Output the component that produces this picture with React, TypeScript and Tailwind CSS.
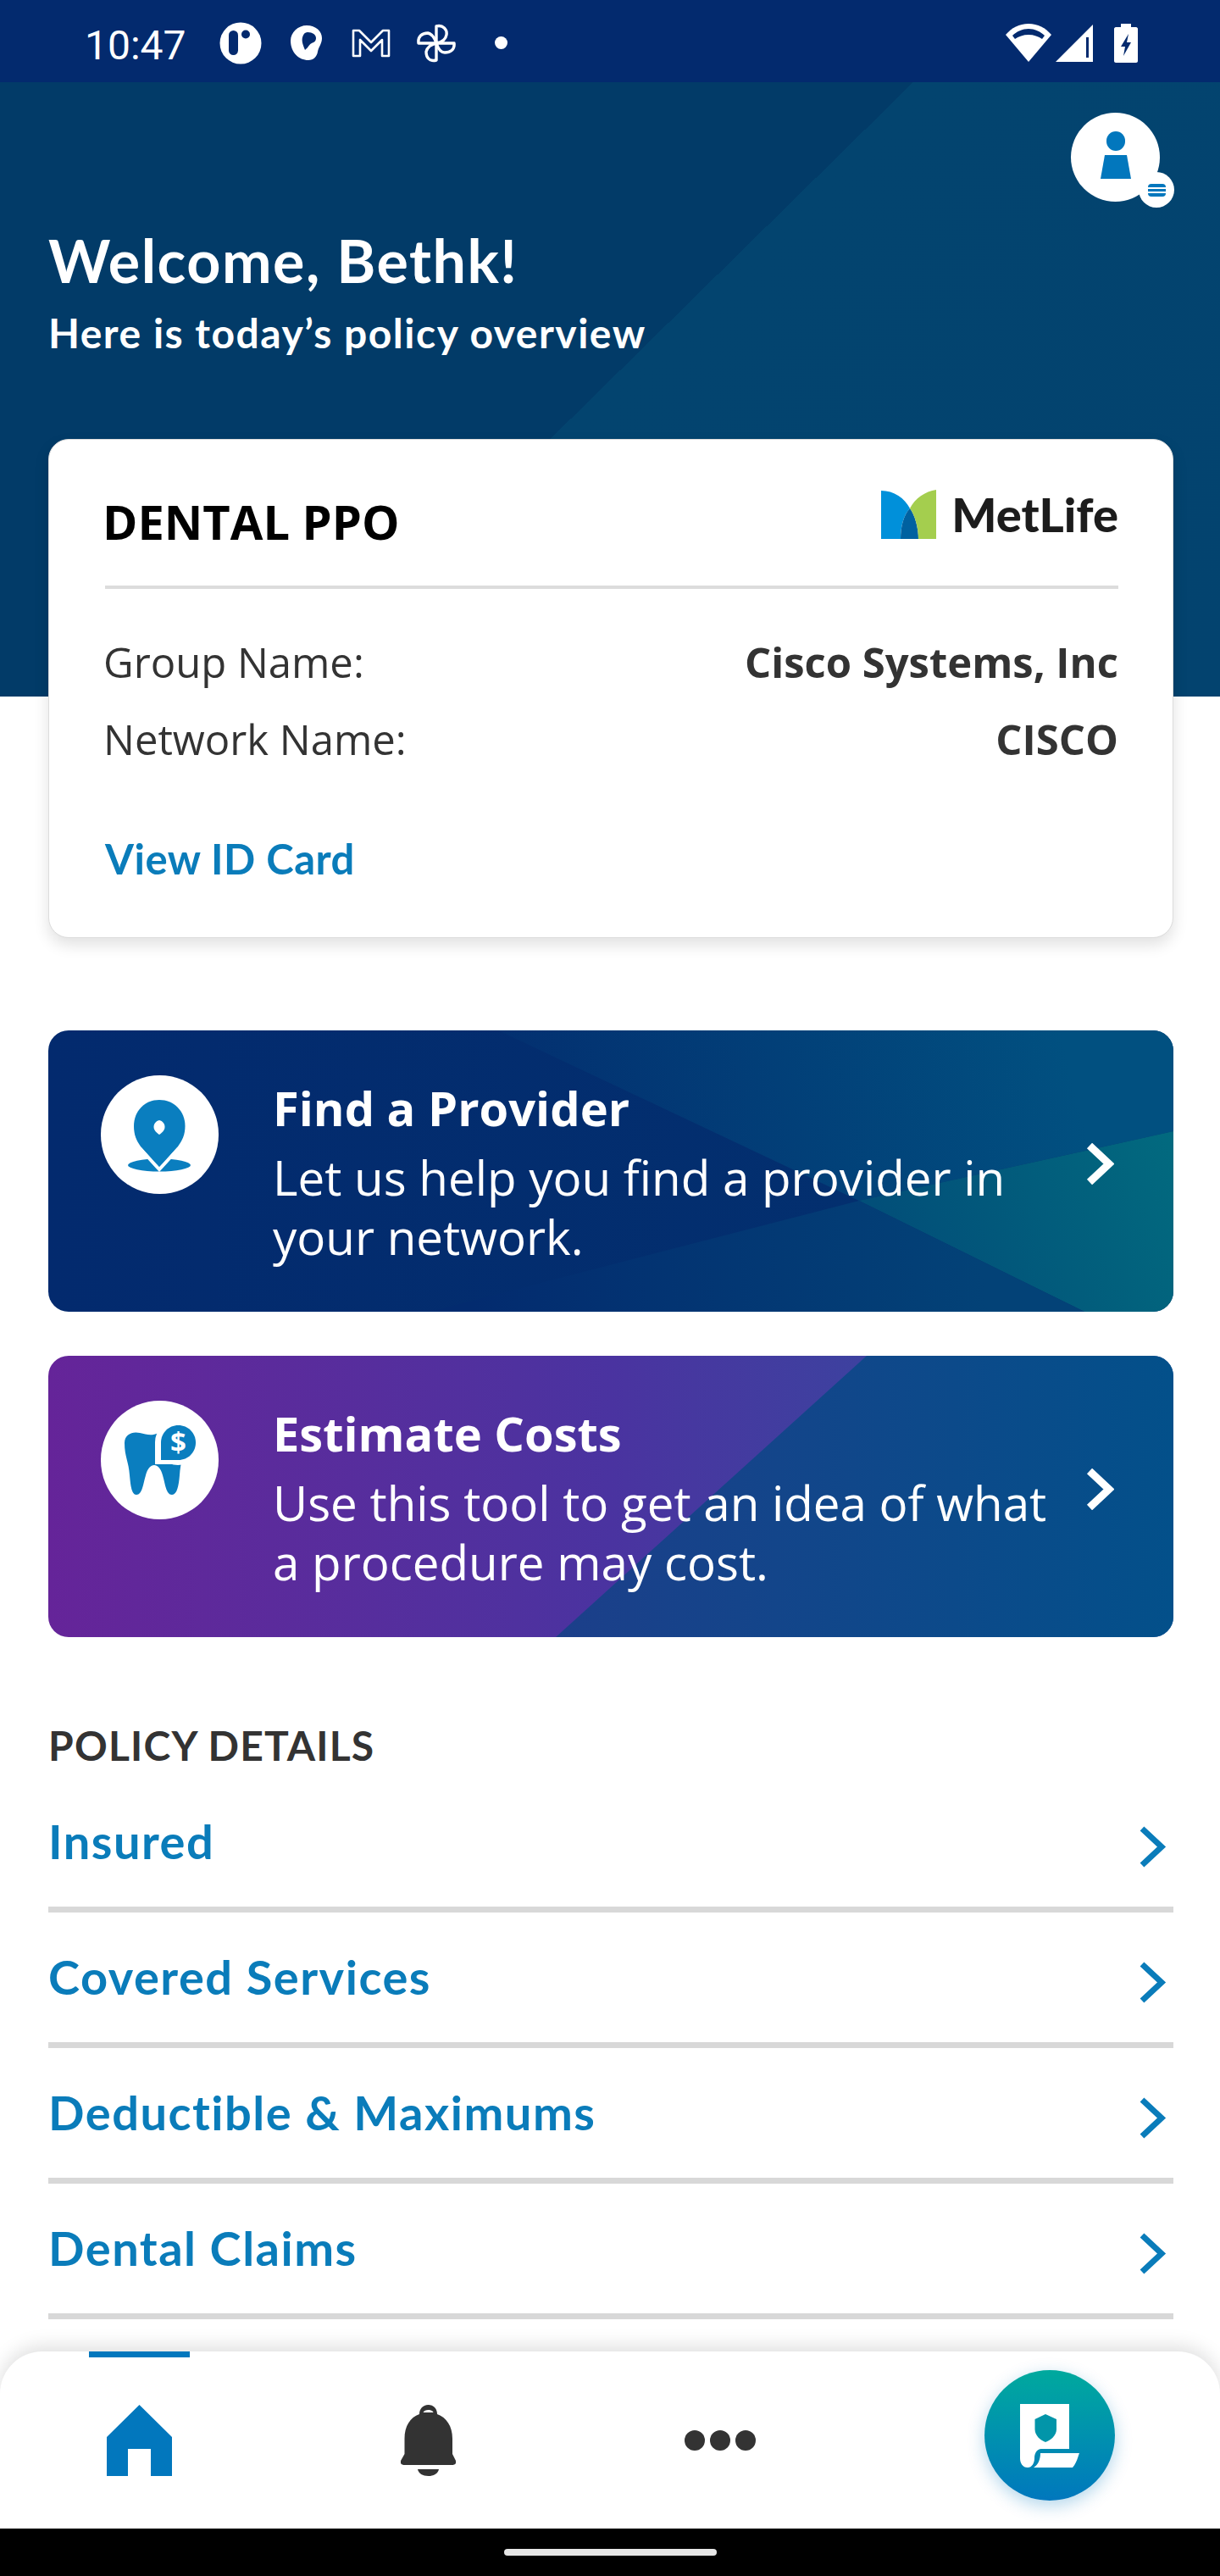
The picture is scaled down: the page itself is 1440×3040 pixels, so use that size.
const policyLinks = ["Insured", "Covered Services", "Deductible & Maximums", "Dental Claims"];

function StatusIcons() {
  return (
    <div className="h-[97px] bg-[#032a6e] flex items-center shrink-0 pl-[100px] pt-[4px] text-white">
      <span className="font-['Roboto',sans-serif] text-[48px] leading-none w-[159px] mt-[6px]">10:47</span>
      {/* app icons */}
      <svg width="50" height="50" viewBox="0 0 50 50">
        <circle cx="25" cy="25" r="24.5" fill="#fff" />
        <rect x="11" y="10" width="11" height="29" rx="5.5" fill="#032a6e" />
        <circle cx="31" cy="14.5" r="5" fill="#032a6e" />
      </svg>
      <svg width="38" height="42" viewBox="0 0 38 42" className="ml-[34px]">
        <path d="M19 0C30 0 37 7 37 15C37 22 33 25 32 31C31 37 27 41 21 41C10 41 0 32 0 18C0 8 9 0 19 0Z" fill="#fff" />
        <path d="M20 8C26 8 30 11 30 15C30 19 27 20 25 21C22 22 21 26 17 29C14 22 13 18 14 14C15 10 17 8 20 8Z" fill="#032a6e" />
      </svg>
      <svg width="46" height="36" viewBox="0 0 46 36" className="ml-[34px]">
        <path d="M2 3H9L23 17L37 3H44V33H36V14L23 27L10 14V33H2Z" fill="none" stroke="#fff" strokeWidth="2.6" strokeLinejoin="round" />
      </svg>
      <svg width="46" height="46" viewBox="0 0 46 46" className="ml-[31px]">
        <g fill="none" stroke="#fff" strokeWidth="3.4" strokeLinejoin="round">
          <path d="M23 23V3C31 1 36 7 35 13C34 19 29 22 23 23Z" />
          <path d="M23 23H44C45 31 39 34 33 34C28 34 25 29 23 23Z" />
          <path d="M23 23V43C15 45 11 40 11 33C12 28 17 24 23 23Z" />
          <path d="M23 23H2C1 15 6 11 13 11C18 12 21 17 23 23Z" />
        </g>
      </svg>
      <span className="ml-[46px] w-[15px] h-[15px] rounded-full bg-white" />
      <div className="ml-auto pr-[97px] flex items-center">
        <svg width="54" height="45" viewBox="0 0 54 45">
          <path d="M27 45L0 13C7 5 16 0 27 0C38 0 47 5 54 13Z" fill="#fff" />
          <path d="M8 14C13 9 20 6 27 6C34 6 41 9 46 14L43 18C39 15 33 13 27 13C21 13 15 15 11 18Z" fill="#032a6e" />
        </svg>
        <svg width="44" height="44" viewBox="0 0 44 44" className="ml-[5px]">
          <path d="M44 0V44H0Z" fill="#fff" />
          <path d="M36 15H39V39H36Z" fill="#032a6e" />
        </svg>
        <svg width="28" height="46" viewBox="0 0 28 46" className="ml-[25px]">
          <path d="M8 0H20V4H26C27 4 28 5 28 6V44C28 45 27 46 26 46H2C1 46 0 45 0 44V6C0 5 1 4 2 4H8Z" fill="#fff" />
          <path d="M17 12L8 27H13L11 38L20 22H15Z" fill="#032a6e" />
        </svg>
      </div>
    </div>
  );
}

function MetLifeMark() {
  return (
    <svg width="65" height="58" viewBox="0 0 65 58" className="shrink-0">
      <path d="M0 1C15 1 28 10 34 22C26 30 23 45 23 58H0Z" fill="#0090da" />
      <path d="M34 22C40 30 44 45 44 58H23C23 45 26 30 34 22Z" fill="#0061a0" />
      <path d="M65 0V58H44C44 45 40 30 34 22C40 10 52 2 65 0Z" fill="#a4ce4e" />
    </svg>
  );
}

function CardRow({ label, value }: { label: string; value: string }) {
  return (
    <div className="flex justify-between h-[91px] items-center text-[#333]">
      <span className="text-[49px] -ml-[2px]">{label}</span>
      <span className="text-[49px] font-bold">{value}</span>
    </div>
  );
}

function ProviderArt() {
  return (
    <svg className="absolute inset-0" width="1328" height="332" viewBox="0 0 1328 332">
      <defs>
        <linearGradient id="pa" gradientUnits="userSpaceOnUse" x1="560" y1="180" x2="1200" y2="20">
          <stop offset="0" stopColor="#032f70" />
          <stop offset="1" stopColor="#015080" />
        </linearGradient>
        <linearGradient id="pb" gradientUnits="userSpaceOnUse" x1="1000" y1="260" x2="1328" y2="120">
          <stop offset="0" stopColor="#024f79" />
          <stop offset="1" stopColor="#026a7f" />
        </linearGradient>
        <linearGradient id="pc" gradientUnits="userSpaceOnUse" x1="500" y1="332" x2="1100" y2="260">
          <stop offset="0" stopColor="#032b6f" />
          <stop offset="1" stopColor="#034277" />
        </linearGradient>
      </defs>
      <polygon points="531,0 1328,0 1328,119 957,201" fill="url(#pa)" />
      <polygon points="957,201 1328,119 1328,332 1223,332" fill="url(#pb)" />
      <polygon points="957,201 1223,332 450,332" fill="url(#pc)" />
    </svg>
  );
}

function CostArt() {
  return (
    <svg className="absolute inset-0" width="1328" height="332" viewBox="0 0 1328 332">
      <defs>
        <linearGradient id="ca" gradientUnits="userSpaceOnUse" x1="600" y1="166" x2="1328" y2="166">
          <stop offset="0" stopColor="#1c3f8a" />
          <stop offset="1" stopColor="#03508a" />
        </linearGradient>
      </defs>
      <polygon points="966,0 1328,0 1328,332 599,332" fill="url(#ca)" />
    </svg>
  );
}

function PinIcon() {
  return (
    <svg width="139" height="140" viewBox="0 0 139 140">
      <ellipse cx="69" cy="106" rx="37" ry="7.5" fill="#0a7ebf" />
      <path d="M69 109L47 84C42 77 39 70 39 60C39 42 52 29 69 29C86 29 99.500 42 99.500 60C99.500 70 96 77 91 84Z" fill="#0a7ebf" />
      <path d="M46 86L69 111L92 86" fill="none" stroke="#fff" strokeWidth="4" />
      <path d="M69 53C73 54 75.500 57 75.500 61C75.500 65 72 68 69 70C66 68 62.500 65 62.500 61C62.500 57 65 54 69 53Z" fill="#fff" />
    </svg>
  );
}

function ToothIcon() {
  return (
    <svg width="139" height="140" viewBox="0 0 139 140">
      <path d="M28 50C28 39 38 36 46 38C54 40 60 42 68 38C82 33 98 40 98 52C98 66 94 72 93 88C92 100 90 111 84 111C77 111 76 98 73 88C71 80 67 76 63 76C59 76 55 80 53 88C50 98 49 111 42 111C36 111 35 98 34 88C33 72 28 66 28 50Z" fill="#0a7ebf" />
      <circle cx="91" cy="49" r="27" fill="#fff" />
      <rect x="64" y="49" width="30" height="26" fill="#fff" />
      <path d="M71 70V49.500C71 38 80 29 91.500 29C103 29 112 38 112 49.500C112 61 103 70 91.500 70Z" fill="#0a7ebf" />
      <text x="91.500" y="61" textAnchor="middle" fill="#fff" fontSize="33" fontWeight="700" fontFamily="'Open Sans',sans-serif">$</text>
    </svg>
  );
}

function Chevron({ className, strokeWidth, color }: { className?: string; strokeWidth: number; color: string }) {
  return (
    <svg width="33" height="49" viewBox="0 0 33 49" className={className}>
      <path d="M4 3L27 24.500L4 46" fill="none" stroke={color} strokeWidth={strokeWidth} />
    </svg>
  );
}

function ActionBanner({
  art,
  bg,
  icon,
  title,
  lines,
}: {
  art: React.ReactNode;
  bg: string;
  icon: React.ReactNode;
  title: string;
  lines: string[];
}) {
  return (
    <div className={`relative h-[332px] rounded-[24px] overflow-hidden text-white ${bg}`}>
      {art}
      <div className="relative flex h-full pl-[62px] pr-[70px] pt-[53px]">
        <div className="w-[139px] h-[140px] rounded-full bg-white shrink-0">{icon}</div>
        <div className="ml-[64px] -mt-[7px] flex-1">
          <div className="text-[56px] font-bold leading-[90px] mb-[3px]">{title}</div>
          {lines.map((line) => (
            <div key={line} className="text-[56.500px] leading-[70px] whitespace-nowrap">
              {line}
            </div>
          ))}
        </div>
        <Chevron className="mt-[80px]" strokeWidth={9} color="#fff" />
      </div>
    </div>
  );
}

function BottomNav() {
  return (
    <div className="relative mt-[38px] h-[209px] rounded-t-[50px] bg-white shadow-[0_-6px_22px_rgba(0,0,0,0.13)] flex items-start shrink-0">
      <div className="w-[329px] pl-[105px] shrink-0">
        <div className="w-[119px] h-[7px] bg-[#0277bd]" />
        <svg width="77" height="84" viewBox="0 0 77 84" className="ml-[21px] mt-[56px]">
          <path d="M38.500 0L77 38V84H52V52H25V84H0V38Z" fill="#0277bd" />
        </svg>
      </div>
      <svg width="65" height="84" viewBox="0 0 65 84" className="mt-[63px] ml-[144px]">
        <path d="M32.500 0C39 0 43 5 43 11C54 15 61 25 61 40V58L65 66C66 70 63 71 60 71H5C2 71 -1 70 0 66L4.500 58V40C4.500 25 11 15 22 11C22 5 26 0 32.500 0Z" fill="#333" />
        <path d="M26.500 9C28 5 37 5 38.500 9Z" fill="#fff" />
        <path d="M20 76H45C44 81 39 84 32.500 84C26 84 21 81 20 76Z" fill="#333" />
      </svg>
      <div className="flex gap-[6px] mt-[93px] ml-[270px]">
        <span className="w-[24px] h-[24px] rounded-full bg-[#333]" />
        <span className="w-[24px] h-[24px] rounded-full bg-[#333]" />
        <span className="w-[24px] h-[24px] rounded-full bg-[#333]" />
      </div>
      <div className="ml-[270px] mt-[22px] w-[154px] h-[154px] rounded-full bg-gradient-to-b from-[#00a99d] to-[#0277bd] shadow-[0_6px_20px_rgba(2,119,189,0.3)] flex items-center justify-center">
        <svg width="70" height="75" viewBox="0 0 70 75">
          <path d="M0 0H58V53H25C20 53 17 58 17 64C17 70 14 75 9 75C3 75 0 70 0 64Z" fill="#fff" />
          <path d="M24 58H70C68 63 67 69 62 75H16C21 72 24 66 24 58Z" fill="#fff" />
          <path d="M30 12L43 18V30C43 37 36 43 30 45C24 43 17.500 37 17.500 30V18Z" fill="#0295a9" />
        </svg>
      </div>
    </div>
  );
}

export default function App() {
  return (
    <div className="w-[1440px] h-[3040px] flex flex-col bg-white overflow-hidden font-['Open_Sans',sans-serif]">
      <StatusIcons />

      <header className="relative h-[725px] shrink-0 bg-[linear-gradient(135.5deg,#023b68_0%,#023b68_49.5%,#03446f_49.5%,#03436f_100%)] text-white px-[57px] font-['Lato',sans-serif]">
        <div className="flex justify-end pt-[36px] pr-[14px]">
          <div className="relative w-[105px] h-[105px] rounded-full bg-white flex flex-col items-center pt-[22px]">
            <span className="w-[22px] h-[23px] rounded-full bg-[#0277bd]" />
            <svg width="36" height="28" viewBox="0 0 36 28" className="mt-[5px]">
              <path d="M5 0H31L36 28H0Z" fill="#0277bd" />
            </svg>
            <div className="absolute left-[80px] top-[70px] w-[42px] h-[42px] rounded-full bg-white flex items-center justify-center">
              <div className="w-[21px] h-[15px] rounded-[4px] bg-[#0277bd] flex flex-col justify-center gap-[3px]">
                <span className="h-[2px] bg-white" />
                <span className="h-[2px] bg-white" />
              </div>
            </div>
          </div>
        </div>
        <h1 className="text-[70px] font-bold leading-[84px] tracking-[1.5px] mt-[27px]">Welcome, Bethk!</h1>
        <p className="text-[48px] font-bold leading-[60px] tracking-[1.5px] mt-[14px] whitespace-nowrap">Here is today’s policy overview</p>
      </header>

      <main className="-mt-[304px] relative pl-[57px] pr-[55px]">
        <section className="h-[589px] rounded-[24px] bg-white border border-[#dcdcdc] shadow-[0_8px_18px_rgba(0,0,0,0.12)] pl-[66px] pr-[64px]">
          <div className="h-[176px] border-b-4 border-[#dcdcdc] flex justify-between">
            <h2 className="text-[56px] font-bold text-black mt-[59px] -ml-[3px] leading-[74px]">DENTAL PPO</h2>
            <div className="flex items-start mt-[59px]">
              <MetLifeMark />
              <span className="ml-[18px] text-[56px] leading-[58px] font-black text-[#1c1c1c] font-['Lato',sans-serif]">MetLife</span>
            </div>
          </div>
          <div className="pt-[41px]">
            <CardRow label="Group Name:" value="Cisco Systems, Inc" />
            <CardRow label="Network Name:" value="CISCO" />
          </div>
          <div className="mt-[65px] text-[49px] font-bold leading-[60px] tracking-[0.5px] text-[#0a7cba] font-['Lato',sans-serif]">View ID Card</div>
        </section>

        <div className="mt-[109px] flex flex-col gap-[52px]">
          <ActionBanner
            art={<ProviderArt />}
            bg="bg-gradient-to-r from-[#032a6e] to-[#03316f]"
            icon={<PinIcon />}
            title="Find a Provider"
            lines={["Let us help you find a provider in", "your network."]}
          />
          <ActionBanner
            art={<CostArt />}
            bg="bg-gradient-to-r from-[#652499] via-[#4a33a0] to-[#22509e]"
            icon={<ToothIcon />}
            title="Estimate Costs"
            lines={["Use this tool to get an idea of what", "a procedure may cost."]}
          />
        </div>

        <div className="mt-[98px] text-[48px] leading-[60px] font-bold tracking-[1.2px] text-[#333] font-['Lato',sans-serif]">POLICY DETAILS</div>
        <ul className="pt-[7px] font-['Lato',sans-serif]">
          {policyLinks.map((item) => (
            <li key={item} className="h-[160px] border-b-[7px] border-[#d8d8d8] flex justify-between items-center pr-[8px]">
              <span className="text-[56px] font-bold tracking-[1.500px] text-[#0a7cba] -mt-[2px]">{item}</span>
              <Chevron className="mt-[12px]" strokeWidth={7} color="#0a7cba" />
            </li>
          ))}
        </ul>
      </main>

      <BottomNav />
      <div className="h-[56px] bg-black flex justify-center items-center shrink-0">
        <span className="w-[251px] h-[8px] rounded-full bg-[#e5e5e5]" />
      </div>
    </div>
  );
}
